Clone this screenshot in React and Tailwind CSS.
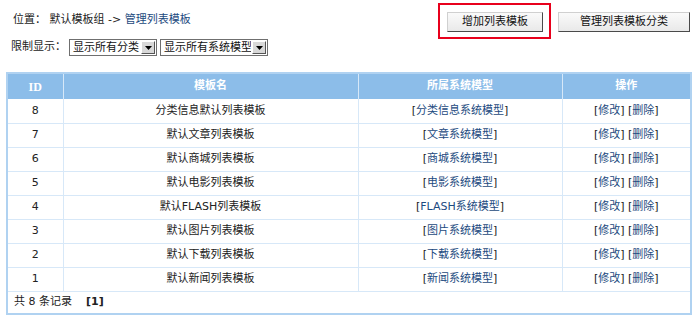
import React from 'react';

const rows = [
  { id: 8, name: '分类信息默认列表模板', model: '分类信息系统模型' },
  { id: 7, name: '默认文章列表模板', model: '文章系统模型' },
  { id: 6, name: '默认商城列表模板', model: '商城系统模型' },
  { id: 5, name: '默认电影列表模板', model: '电影系统模型' },
  { id: 4, name: '默认FLASH列表模板', model: 'FLASH系统模型' },
  { id: 3, name: '默认图片列表模板', model: '图片系统模型' },
  { id: 2, name: '默认下载列表模板', model: '下载系统模型' },
  { id: 1, name: '默认新闻列表模板', model: '新闻系统模型' },
];

const FakeSelect = ({ label, width }) => (
  <div className={`flex h-[17px] items-stretch border border-[#6f6f6f] bg-white ${width}`}>
    <span className="flex-1 overflow-hidden whitespace-nowrap pl-[3px] leading-[15px] text-[#111]">{label}</span>
    <span className="m-[1px] flex w-[14px] items-center justify-center border border-t-white border-l-white border-b-[#555] border-r-[#555] bg-[#d8d8d8]">
      <svg width="7" height="4" viewBox="0 0 7 4">
        <path d="M0 0h7L3.5 4z" fill="#000" />
      </svg>
    </span>
  </div>
);

const OldButton = ({ children, width }) => (
  <button className={`h-[20px] ${width} border border-[#d0d0d0] border-b-[#4a4a4a] border-r-[#4a4a4a] bg-gradient-to-b from-[#fafafa] to-[#e9e9e9] text-[11px] leading-[18px] text-[#111]`}>
    {children}
  </button>
);

const App = () => {
  return (
    <div className="h-[321px] w-[700px] bg-white text-[11px] text-[#222]" style={{ fontFamily: '"DejaVu Sans", "Noto Sans CJK SC", sans-serif' }}>
      <div className="flex items-start justify-between pl-[13px] pr-[10px] pt-[3px]">
        <div className="pt-[8px]">
          <div className="leading-[18px]">
            位置： 默认模板组 -&gt; <span className="text-[#1c4a80]">管理列表模板</span>
          </div>
          <div className="mt-[10px] flex items-center gap-[3px] -ml-[2px]">
            <span className="whitespace-nowrap">限制显示：</span>
            <FakeSelect label="显示所有分类" width="w-[88px]" />
            <FakeSelect label="显示所有系统模型" width="w-[108px]" />
          </div>
        </div>
        <div className="flex items-start gap-[7px]">
          <div className="h-[36px] border-2 border-[#e8001c] pl-[7px] pr-[6px] pt-[7px]">
            <OldButton width="w-[96px]">增加列表模板</OldButton>
          </div>
          <div className="pt-[9px]">
            <OldButton width="w-[132px]">管理列表模板分类</OldButton>
          </div>
        </div>
      </div>

      <div className="ml-[6px] mt-[16px] w-[686px] border-2 border-[#b0d2f1]">
        <table className="w-full table-fixed border-collapse">
          <colgroup>
            <col className="w-[55px]" />
            <col className="w-[295px]" />
            <col className="w-[204px]" />
            <col />
          </colgroup>
          <thead>
            <tr className="h-[25px] bg-[#8cbde9] font-bold text-white">
              <th className="border-r border-[#d7e8f8]" style={{ fontFamily: '"Liberation Serif", serif', fontSize: '12px' }}>ID</th>
              <th className="border-r border-[#d7e8f8]">模板名</th>
              <th className="border-r border-[#d7e8f8]">所属系统模型</th>
              <th>操作</th>
            </tr>
          </thead>
          <tbody>
            {rows.map(row => (
              <tr key={row.id} className="h-[24px] border-b border-[#d7e8f8] text-center">
                <td className="border-r border-[#d7e8f8]">{row.id}</td>
                <td className="border-r border-[#d7e8f8]">{row.name}</td>
                <td className="border-r border-[#d7e8f8]">
                  [<span className="text-[#1c4a80]">{row.model}</span>]
                </td>
                <td>
                  [<span className="text-[#1c4a80]">修改</span>] [<span className="text-[#1c4a80]">删除</span>]
                </td>
              </tr>
            ))}
            <tr className="h-[22px]">
              <td colSpan={4} className="pl-[6px] text-left">
                共 8 条记录 &nbsp;&nbsp; <b>[1]</b>
              </td>
            </tr>
          </tbody>
        </table>
      </div>
    </div>
  );
};

export default App;
